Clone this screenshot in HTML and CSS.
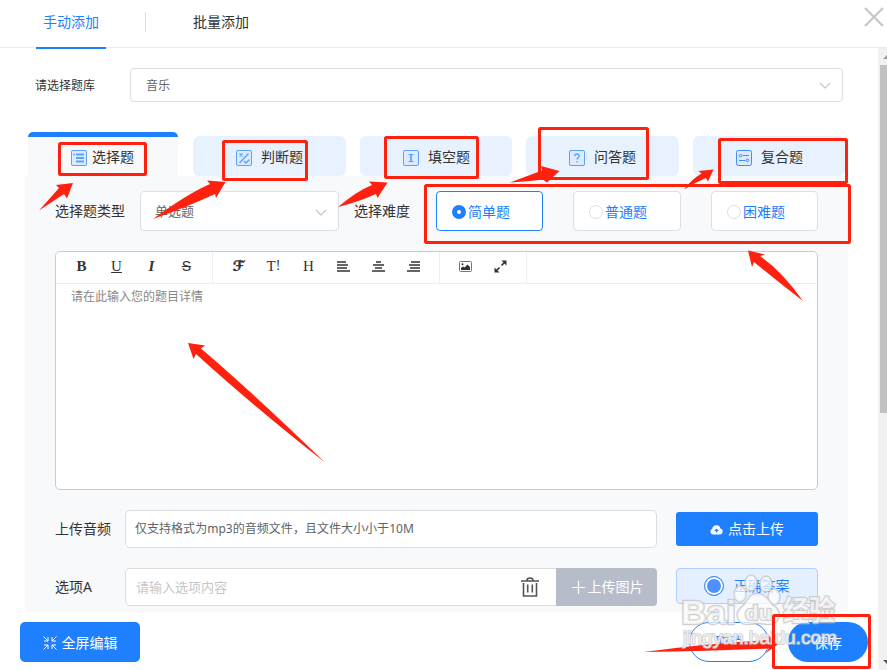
FILE: index.html
```html
<!DOCTYPE html>
<html lang="zh-CN">
<head>
<meta charset="utf-8">
<title>手动添加</title>
<link rel="stylesheet" href="styles.css">
</head>
<body>
<div class="dialog">
  <header class="head">
    <div class="mode active">手动添加</div>
    <i class="split"></i>
    <div class="mode">批量添加</div>
    <svg class="close" width="20" height="20" viewBox="0 0 20 20"><path d="M1 1L19 19M19 1L1 19"/></svg>
  </header>
  <div class="main">
    <main class="content">
      <div class="bank">
        <label>请选择题库</label>
        <div class="select"><span>音乐</span><svg class="chev" width="12" height="8" viewBox="0 0 12 8"><path d="M1 1l5 5 5-5"/></svg></div>
      </div>
      <nav class="tabs">
        <div class="tab current"><svg class="ticon" width="16" height="16" viewBox="0 0 16 16"><rect x=".5" y=".5" width="15" height="15" rx="1.5"/><path class="thick" d="M5 4.500h8M5 8h8M5 11.500h8M2.500 4.500H4"/></svg><span>选择题</span></div>
        <div class="tab"><svg class="ticon" width="16" height="16" viewBox="0 0 16 16"><rect x=".5" y=".5" width="15" height="15" rx="1.5"/><path d="M3.500 3.500l3 3M6.500 3.500l-3 3M3.500 13L12.500 3.500M8 11l2 2 3.500-3.500" stroke-width="1.400"/></svg><span>判断题</span></div>
        <div class="tab"><svg class="ticon" width="16" height="16" viewBox="0 0 16 16"><rect x=".5" y=".5" width="15" height="15" rx="1.5"/><path d="M5.500 4.500h5M5.500 11.500h5"/><path class="thick" d="M8 4.500v7"/></svg><span>填空题</span></div>
        <div class="tab"><svg class="ticon" width="16" height="16" viewBox="0 0 16 16"><rect x=".5" y=".5" width="15" height="15" rx="1.5"/><path d="M5.700 6.300c0-3 4.600-3 4.600-.3 0 1.600-2.300 1.700-2.300 3.500M8 11v1.500" stroke-width="1.300"/></svg><span>问答题</span></div>
        <div class="tab"><svg class="ticon strong" width="16" height="16" viewBox="0 0 16 16"><rect x=".5" y=".5" width="15" height="15" rx="2"/><circle cx="4.500" cy="5.700" r="1.300"/><path d="M6.500 5.500H13M3 10.500h6.500"/><circle cx="11.500" cy="10.300" r="1.300"/></svg><span>复合题</span></div>
      </nav>
      <section class="panel">
        <div class="options">
          <label class="type-label">选择题类型</label>
          <div class="select type"><span>单选题</span><svg class="chev" width="12" height="8" viewBox="0 0 12 8"><path d="M1 1l5 5 5-5"/></svg></div>
          <label class="level-label">选择难度</label>
          <div class="levels">
            <div class="level on"><i class="dot"></i>简单题</div>
            <div class="level"><i class="dot"></i>普通题</div>
            <div class="level"><i class="dot"></i>困难题</div>
          </div>
        </div>
        <div class="editor">
          <div class="tools">
            <div class="group">
              <span class="tool bold">B</span><span class="tool under">U</span><span class="tool ital">I</span><span class="tool strike">S</span>
            </div>
            <div class="group">
              <span class="tool script">ℱ</span><span class="tool">T<small>!</small></span><span class="tool">H</span>
              <span class="tool"><svg width="13" height="11" viewBox="0 0 13 11"><path d="M0 1h9M0 4h11M0 7h10M0 10h13"/></svg></span>
              <span class="tool"><svg width="13" height="11" viewBox="0 0 13 11"><path d="M4 1h5M1 4h11M3 7h7M0 10h13"/></svg></span>
              <span class="tool"><svg width="13" height="11" viewBox="0 0 13 11"><path d="M4 1h9M2 4h11M3 7h10M0 10h13"/></svg></span>
            </div>
            <div class="group">
              <span class="tool"><svg width="13" height="11" viewBox="0 0 13 11"><rect class="thin" x=".5" y=".5" width="12" height="10" rx="1"/><path class="solid" d="M2 9V7l2-1.500 1.500 1L8.500 3.500 11 6v3z"/><circle class="solid" cx="3.500" cy="3.300" r="1"/></svg></span>
              <span class="tool"><svg width="13" height="13" viewBox="0 0 13 13"><path d="M7.500 5.500l3-3M5.500 7.500l-3 3"/><path class="solid" d="M7.500 .5h5v5zM.500 7.500v5h5z"/></svg></span>
            </div>
          </div>
          <div class="area">请在此输入您的题目详情</div>
        </div>
        <div class="line">
          <label>上传音频</label>
          <div class="field audio">仅支持格式为mp3的音频文件，且文件大小小于10M</div>
          <div class="upload"><svg width="13" height="11" viewBox="0 0 13 11"><path fill="#fff" d="M3 10.500A3 3 0 0 1 2.300 4.700 4.100 4.100 0 0 1 10.400 4.600 3 3 0 0 1 10 10.500z"/><path fill="#1e80ff" d="M6.500 4.500L4 7h1.800v1.500h1.400V7H9z"/></svg>点击上传</div>
        </div>
        <div class="line">
          <label>选项A</label>
          <div class="field choice"><span>请输入选项内容</span>
            <svg class="trash" width="18" height="20" viewBox="0 0 18 20"><path d="M0 4h18M6 3.500q0-2.500 3-2.500t3 2.500M2.500 6v13h13V6M6.700 7.500v8M11.300 7.500v8"/></svg>
            <div class="picture"><svg width="13" height="13" viewBox="0 0 13 13"><path d="M6.500 0v13M0 6.500h13"/></svg>上传图片</div>
          </div>
          <div class="correct"><i></i>正确答案</div>
        </div>
      </section>
      <footer class="foot">
        <div class="full"><svg width="14" height="14" viewBox="0 0 14 14"><path d="M.5.500L5 5M5 1v4H1M13.500.500L9 5M9 1v4h4M.500 13.500L5 9M5 13V9H1M13.500 13.500L9 9M9 13V9h4"/></svg>全屏编辑</div>
        <div class="cancel">取消</div>
        <div class="save">保存</div>
      </footer>
    </main>
    <aside class="bar"><i class="up"></i><i class="thumb"></i><i class="down"></i></aside>
  </div>
  <svg class="overlay" width="887" height="670" viewBox="0 0 887 670">
    <g class="arrows">
      <path d="M73 183L56 185l3 3L39 210.500 64 194l3 4.500z"/>
      <path d="M225.500 182L207 180.500l3 3.500Q187 194 153 219q34-12 62-25l1 4z"/>
      <path d="M387.500 182.500L369 181.500l3 3.500Q357 191 338 207q20-5 38-13l1.500 4z"/>
      <path d="M559.500 171L541 166l1 4.500L510 182.500q18-1 33-3l4 3z"/>
      <path d="M713.500 169.500L698.500 171l3 2.500Q692 179 684 189.500q11-7 22-11.500l2 3.500z"/>
      <path d="M748 250.500L765 254.500l-5 1.500Q782 271 803 301 778 282 754 262l-2 5z"/>
      <path d="M188 343L205 345.500l-4 3Q252 392 325 462.500 252 405 196 354l-2.500 5z"/>
      <path d="M778.500 644L766 633.500l2 6.500Q710 643 644 652 710 651 769 648.500l-4 5z"/>
    </g>
    <g class="mark">
      <text x="681" y="624" font-size="34" textLength="55" lengthAdjust="spacingAndGlyphs">Bai</text>
      <ellipse cx="740" cy="594" rx="5.500" ry="7.500"/><ellipse cx="751" cy="583" rx="5.500" ry="7.500"/><ellipse cx="766" cy="584" rx="5.500" ry="7.500"/><ellipse cx="774" cy="597" rx="5.500" ry="7.500"/>
      <path d="M757 594c-9 0-9 9-16 14-6 5-4 16 6 16 5 0 7-1 11-1s7 1 11 1c11 0 12-12 6-17-6-4-8-13-18-13z"/>
      <text x="745" y="620" font-size="21" textLength="27" lengthAdjust="spacingAndGlyphs">du</text>
      <text class="cn" x="783" y="621" font-size="28" textLength="52" lengthAdjust="spacingAndGlyphs">经验</text>
      <text class="url" x="683" y="644" font-size="18" textLength="154" lengthAdjust="spacingAndGlyphs">jingyan.baidu.com</text>
    </g>
    <g class="boxes">
      <rect x="59.500" y="143.500" width="86" height="31" rx="1"/>
      <rect x="223.500" y="141.500" width="83" height="38" rx="1"/>
      <rect x="385.500" y="137.500" width="92" height="40" rx="1"/>
      <rect x="539.500" y="128.500" width="108" height="50" rx="1"/>
      <rect x="719.500" y="139.500" width="127" height="43" rx="1"/>
      <rect x="425.500" y="185.500" width="424" height="57" rx="1"/>
      <rect x="773.500" y="615.500" width="96" height="52" rx="1"/>
    </g>
  </svg>
</div>
</body>
</html>
```
FILE: styles.css
```css
* { box-sizing: border-box; }
body { margin: 0; background: #fff; font: 14px/20px "Noto Sans", "Noto Sans CJK SC", sans-serif; color: #333; }
svg { display: block; flex: none; fill: none; }
.dialog { position: relative; width: 887px; height: 670px; overflow: hidden; display: flex; flex-direction: column; white-space: nowrap; }
.head { height: 48px; flex: none; display: flex; border-bottom: 1px solid #ebebeb; padding-left: 36px; }
.mode { width: 70px; height: 49px; line-height: 44px; text-align: center; }
.mode.active { color: #1e80ff; border-bottom: 2px solid #1e80ff; }
.split { width: 1px; height: 20px; margin: 12px 40px 0 39px; background: #ddd; }
.close { margin: 7px 3px 0 auto; stroke: #c9c9c9; stroke-width: 2.4; }
.main { display: flex; flex: 1; min-height: 0; }
.content { width: 878px; display: flex; flex-direction: column; }
.bar { width: 9px; background: #f1f1f1; display: flex; flex-direction: column; padding-left: 2px; }
.up { width: 0; height: 0; margin: 7px 0 6px 3px; border: 4px solid transparent; border-top: 0; border-bottom-color: #999; }
.thumb { height: 348px; background: #c1c1c1; }
.down { margin: auto 0 6px 3px; border: 4px solid transparent; border-bottom: 0; border-top-color: #555; width: 0; }
.bank { display: flex; align-items: center; margin: 20px 35px 0; height: 34px; font-size: 12px; }
.bank label { width: 95px; padding-top: 2px; }
.bank .select span { padding-top: 2px; }
.select { flex: 1; height: 34px; border: 1px solid #dcdfe6; border-radius: 4px; background: #fff; display: flex; align-items: center; justify-content: space-between; padding: 0 11px 0 15px; color: #666; }
.chev { stroke: #c0c4cc; stroke-width: 1.2; margin-top: 2px; }
.tabs { display: grid; grid-template-columns: 151px 153px 152px 153px 152px; column-gap: 14px; align-items: end; height: 44px; margin: 30px 0 0 28px; }
.tab { height: 40px; border-radius: 6px; background: #e8f2ff; display: flex; align-items: center; padding: 3px 0 0 43px; gap: 9px; }
.tab span { margin-top: -2px; }
.tab.current { height: 44px; width: 150px; border-radius: 5px 5px 0 0; border-top: 5px solid #1e80ff; background: #f8f9fb; padding: 2px 0 0 43px; gap: 5px; }
.ticon { stroke: #5aa2ff; stroke-width: 1; background: #dcebff; }
.ticon .thick { stroke-width: 1.8; }
.ticon.strong { stroke: #398dff; }
.panel { width: 823px; height: 436px; margin-left: 25px; background: #f8f9fb; padding: 15px 30px 0; display: flex; flex-direction: column; }
.options { display: flex; height: 40px; align-items: center; }
.type-label { width: 85px; }
.type { flex: none; width: 199px; height: 40px; padding-left: 14px; font-size: 13px; }
.type .chev { margin-top: 4px; }
.level-label { margin-left: 15px; width: 82px; }
.levels { display: grid; grid-template-columns: 107px 108px 107px; column-gap: 30px; }
.level { height: 40px; display: flex; align-items: center; gap: 2px; padding: 2px 0 0 15px; color: #1e80ff; background: #fff; border: 1px solid #dcdfe6; border-radius: 4px; }
.level.on { border-color: #1e80ff; }
.dot { width: 14px; height: 14px; border: 1px solid #dcdfe6; border-radius: 50%; background: #fff; }
.on .dot { border: 5px solid #1e80ff; }
.editor { height: 239px; margin-top: 20px; border: 1px solid #c9cbcf; border-radius: 5px; background: #fff; flex: none; }
.tools { display: flex; height: 32px; border-bottom: 1px solid #eee; padding-left: 8px; }
.group { display: flex; align-items: center; border-right: 1px solid #eee; padding: 0 8px 3px 0; }
.group + .group { padding-left: 8px; }
.tool { width: 35px; height: 29px; display: flex; align-items: center; justify-content: center; font: 15px/20px "Liberation Serif", serif; color: #333; }
.tool svg { stroke: #333; stroke-width: 1.6; }
.tool .solid { fill: #333; stroke: none; }
.tool .thin { stroke-width: 1; stroke: #777; }
.tool small { font-size: 14px; }
.bold { font-weight: bold; }
.under { text-decoration: underline; }
.ital { font-style: italic; font-weight: bold; }
.strike { text-decoration: line-through; font-family: "Liberation Sans", sans-serif; font-size: 14px; }
.script { font-family: "DejaVu Sans", serif; font-weight: bold; font-size: 14px; -webkit-text-stroke: .5px #333; }
.group:first-child { width: 149px; }
.group:nth-child(2) { width: 227px; }
.group:nth-child(3) { width: 87px; }
.area { padding: 3px 15px; font-size: 12px; color: #888; }
.line { display: flex; align-items: center; height: 38px; margin-top: 20px; flex: none; }
.line label { width: 70px; }
.field { width: 532px; height: 38px; border: 1px solid #dcdddf; border-radius: 5px; background: #fff; display: flex; align-items: center; padding-left: 9px; font-size: 12px; color: #606266; }
.audio { letter-spacing: .03px; }
.choice { padding-left: 10px; font-size: 13px; color: #c6c6c6; }
.trash { margin-left: auto; margin-right: 17px; stroke: #555; stroke-width: 1.6; }
.picture { width: 101px; height: 38px; margin-right: -1px; background: #b7bccb; border-radius: 0 4px 4px 0; color: #fff; font-size: 14px; display: flex; align-items: center; justify-content: center; gap: 3px; padding-left: 2px; }
.picture svg { stroke: #fff; stroke-width: 1.2; }
.upload, .correct { width: 142px; height: 34px; margin-left: 19px; border-radius: 3px; display: flex; align-items: center; justify-content: center; }
.upload { background: #1e80ff; color: #fff; gap: 5px; }
.correct { height: 36px; margin-bottom: 2px; background: #e4f0ff; border: 1px solid #add0ff; border-radius: 4px; color: #1e80ff; gap: 10px; padding-right: 1px; }
.correct i { width: 20px; height: 20px; border: 1px solid #3988ff; border-radius: 50%; background: #4d90ff; box-shadow: inset 0 0 0 2px #fff; }
.foot { display: flex; height: 58px; padding: 10px 10px 0 20px; color: #fff; }
.foot div { height: 40px; display: flex; align-items: center; justify-content: center; }
.foot .full { width: 120px; background: #1e80ff; border-radius: 5px; gap: 5px; padding-top: 2px; }
.full svg { stroke: #fff; }
.foot .cancel { width: 80px; margin-left: auto; border: 1px solid #1e80ff; border-radius: 20px; color: #1e80ff; }
.foot .save { width: 80px; margin-left: 19px; background: #1e80ff; border-radius: 20px; padding-top: 2px; }
.overlay { position: absolute; left: 0; top: 0; pointer-events: none; }
.boxes { stroke: #ff2110; stroke-width: 3; }
.arrows { fill: #ff2110; }
.mark { fill: #fff; fill-opacity: .7; stroke: #c4c4c4; stroke-opacity: .8; stroke-width: 2.4; paint-order: stroke; font-family: "Liberation Sans", sans-serif; font-weight: bold; }
.mark .cn { font-family: "Noto Sans CJK SC", sans-serif; }
.mark .url { font-weight: normal; stroke-width: 1.6; }
```
